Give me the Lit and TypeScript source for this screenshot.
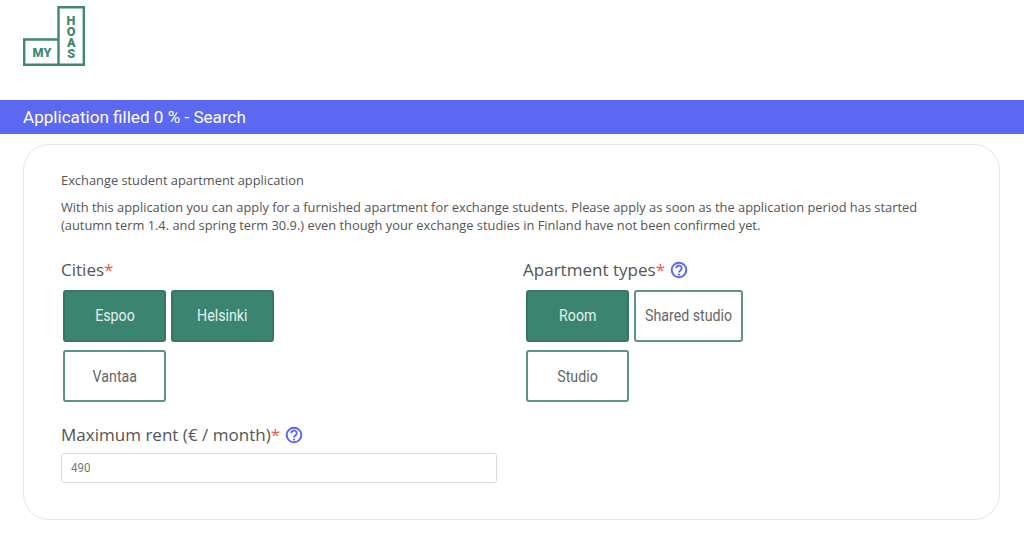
import { LitElement, html, css, svg } from "lit";
import { customElement } from "lit/decorators.js";

const help = html`<svg class="help" viewBox="0 0 18 18" width="18" height="18" aria-hidden="true">
  <circle cx="9" cy="9" r="7.3" fill="none" stroke="#5c67f2" stroke-width="2"></circle>
  <path d="M6.3 7.2a2.7 2.7 0 1 1 4.2 2.2c-1 .7-1.5 1-1.5 2.1" fill="none" stroke="#5c67f2" stroke-width="1.9"></path>
  <circle cx="9" cy="13.5" r="1.1" fill="#5c67f2"></circle>
</svg>`;

const logo = svg`<svg class="logo" viewBox="0 0 62 60" width="62" height="60" aria-hidden="true">
  <path d="M1.2 33.5H35.5V1.2H60.8V58.8H1.2Z M35.5 33.5V58.8" fill="none" stroke="#3f8873" stroke-width="2.4"></path>
  <text class="lt" x="19" y="51" text-anchor="middle">MY</text>
  <text class="lt vert" x="48" y="6.5">HOAS</text>
</svg>`;

@customElement("app-root")
export class AppRoot extends LitElement {
  static styles = css`
    :host { display: block; width: 1024px; height: 542px; background: #fff; font-family: "Open Sans", sans-serif; color: #555; overflow: hidden; }
    .top { height: 100px; padding: 6px 0 0 23px; box-sizing: border-box; }
    .logo { display: block; }
    .lt { font-family: Roboto, sans-serif; font-weight: 900; font-size: 12.6px; fill: #3f8873; }
    .vert { writing-mode: vertical-rl; text-orientation: upright; letter-spacing: -3.7px; }
    .bar { height: 34px; background: #5c67f2; color: #fff; font: 400 17.1px/34px Roboto, sans-serif; padding-left: 23px; }
    .card { margin: 10px 24px 0 23px; height: 376px; box-sizing: border-box; border: 1px solid #e6e6e6; border-radius: 26px; padding: 26px 37px 0; }
    .title { font-size: 12.85px; line-height: 18px; margin: 0 0 9px; color: #555; }
    .intro { font-size: 12.85px; line-height: 18px; margin: 0; color: #555; width: 880px; }
    .cols { display: grid; grid-template-columns: 462px 1fr; margin-top: 24px; }
    .label { display: flex; align-items: center; font-size: 17.05px; line-height: 24px; color: #555; height: 24px; }
    .req { color: #ef5a3c; }
    .help { margin-left: 5px; }
    .btns { display: flex; flex-wrap: wrap; gap: 8px 5px; padding: 8px 0 0 2px; width: 240px; }
    .btns.right { padding-left: 3px; }
    .btn { box-sizing: border-box; height: 52px; width: 103px; border: 2px solid #5f9283; border-radius: 3px; background: #fff; color: #666; font: 400 16.5px/48px Roboto, sans-serif; text-align: center; white-space: nowrap; padding: 0; display: flex; justify-content: center; }
    .btn span { display: inline-block; transform: scaleX(0.86); }
    .btn.on { background: #3b8470; border-color: #357664; color: #e4f1ed; }
    .btn.off { line-height: 50px; }
    .btn.wide { width: 109px; line-height: 48px; }
    .rent { margin-top: 21px; }
    .input { box-sizing: border-box; margin-top: 6px; width: 436px; height: 30px; border: 1px solid #dcdcdc; border-radius: 3px; padding: 0 9px; font: 400 12.5px/28px Roboto, sans-serif; color: #777; }
    .input span { display: inline-block; transform: scaleX(0.92); transform-origin: left; }
  `;

  private btn(t: string, on = false, wide = false) {
    return html`<div class="btn ${on ? "on" : "off"} ${wide ? "wide" : ""}"><span>${t}</span></div>`;
  }

  render() {
    return html`
      <div class="top">${logo}</div>
      <div class="bar">Application filled 0 % - Search</div>
      <div class="card">
        <p class="title">Exchange student apartment application</p>
        <p class="intro">With this application you can apply for a furnished apartment for exchange students. Please apply as soon as the application period has started (autumn term 1.4. and spring term 30.9.) even though your exchange studies in Finland have not been confirmed yet.</p>
        <div class="cols">
          <div>
            <div class="label">Cities<span class="req">*</span></div>
            <div class="btns">${this.btn("Espoo", true)}${this.btn("Helsinki", true)}${this.btn("Vantaa")}</div>
          </div>
          <div>
            <div class="label">Apartment types<span class="req">*</span>${help}</div>
            <div class="btns right">${this.btn("Room", true)}${this.btn("Shared studio", false, true)}${this.btn("Studio")}</div>
          </div>
        </div>
        <div class="rent">
          <div class="label">Maximum rent (€ / month)<span class="req">*</span>${help}</div>
          <div class="input"><span>490</span></div>
        </div>
      </div>
    `;
  }
}
